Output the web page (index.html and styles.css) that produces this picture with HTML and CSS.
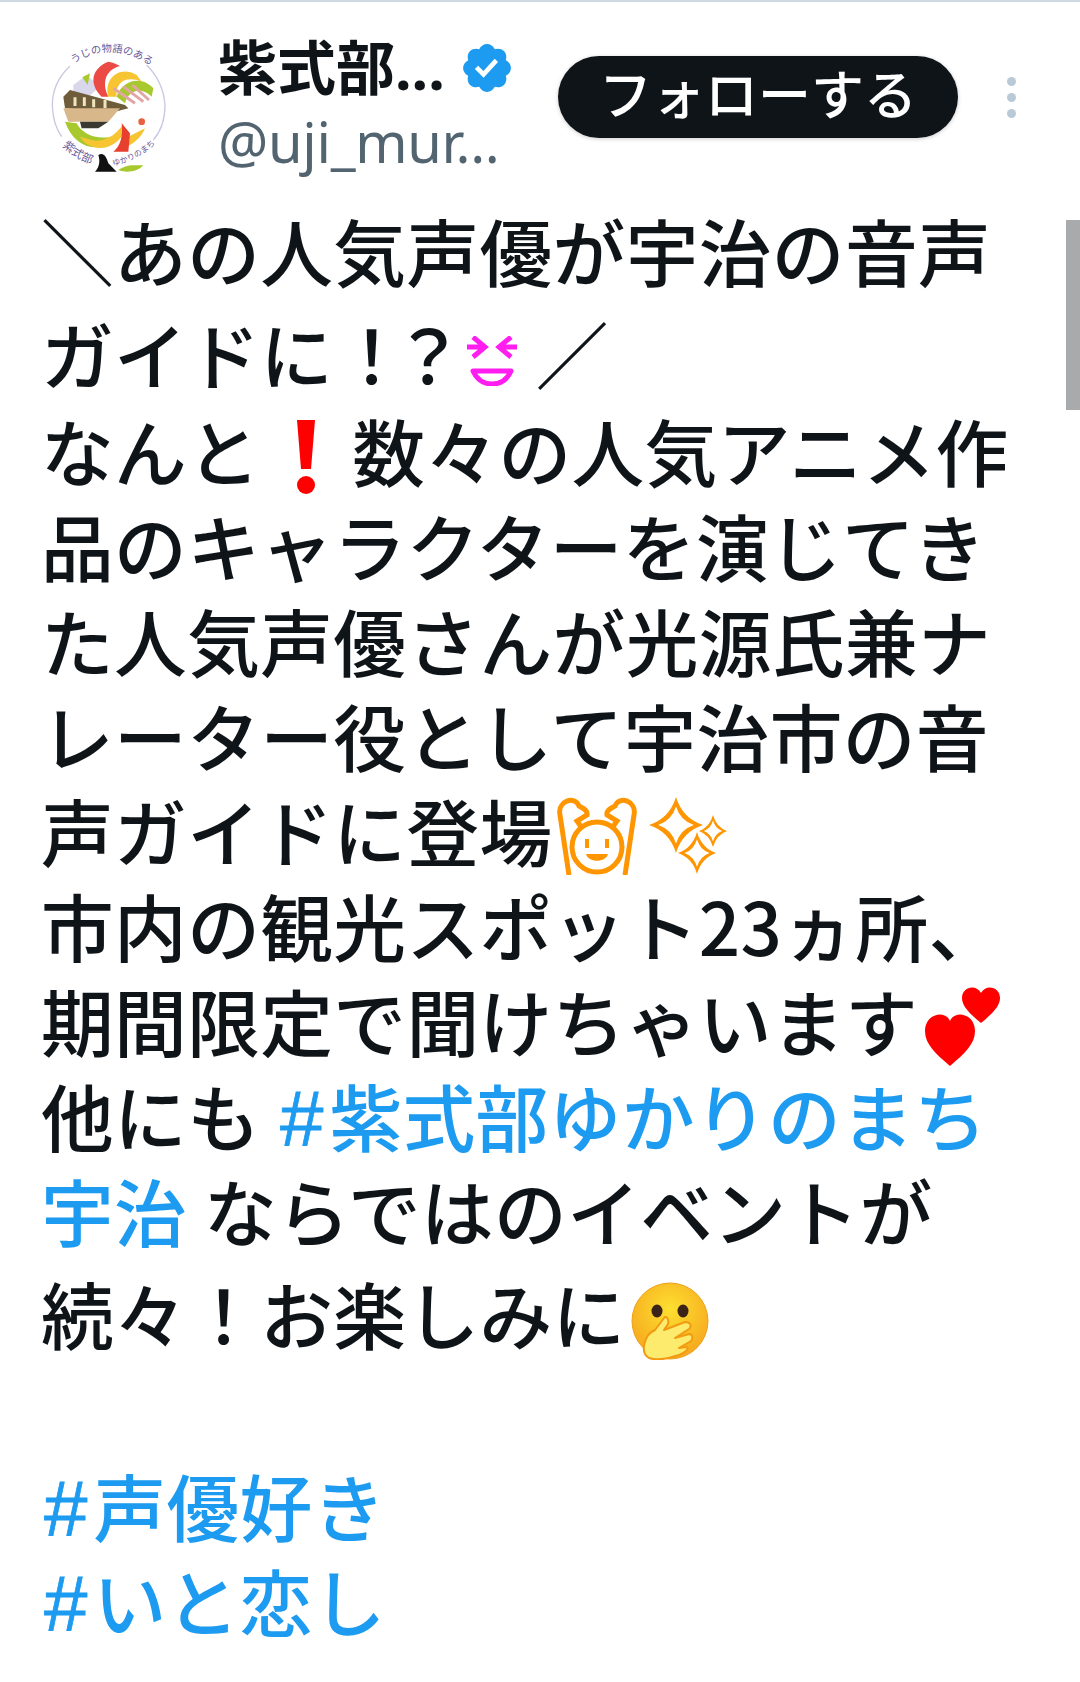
FILE: index.html
```html
<!DOCTYPE html>
<html lang="ja">
<head>
<meta charset="utf-8">
<title>Tweet</title>
<link rel="stylesheet" href="styles.css">
</head>
<body>
<div class="scrollbar"></div>
<header class="head">
  <svg class="avatar" viewBox="0 0 390 438" aria-hidden="true">
    <path d="M75 78Q20 130 22 200 25 255 50 290M305 75Q355 125 360 195 360 260 325 300" fill="none" stroke="#c8c9e2" stroke-width="4"/>
    <path d="M85 135L125 105 165 140 130 170 85 165Z" fill="#d9d7ec"/>
    <path d="M112 112L135 100 128 135Z" fill="#a8c92e"/>
    <path d="M170 170C130 130 140 85 190 65 205 68 215 72 225 78 180 90 170 130 190 170Z" fill="#ec4a45"/>
    <path d="M190 170C175 115 225 75 275 105L290 125C240 105 210 130 215 170Z" fill="#f7c531"/>
    <path d="M215 170C230 120 290 105 325 145L320 170C290 140 250 150 240 190Z" fill="#a8c92e"/>
    <path d="M205 145L270 190M235 140L295 185M262 135L312 180" stroke="#e3a6a6" stroke-width="9"/>
    <path d="M55 170L75 150 240 195 250 205 210 215 60 205Z" fill="#6e5c3a"/>
    <path d="M90 172V198M118 172V198M146 178V202M180 180V204" stroke="#efe6bc" stroke-width="9"/>
    <path d="M55 205H225L190 245H70Z" fill="#d8b88a"/>
    <path d="M105 245H190L160 265H110Z" fill="#3a3830"/>
    <path d="M60 245C80 300 120 330 175 320L200 290C150 300 110 280 95 250Z" fill="#a8c92e"/>
    <path d="M105 290C130 330 190 340 230 290L235 250C220 280 180 310 140 300Z" fill="#f7c531"/>
    <path d="M235 325C270 310 290 290 300 265L250 290Z" fill="#f7c531"/>
    <path d="M230 250C235 290 225 320 205 335L250 335 255 280Z" fill="#e8402f"/>
    <circle cx="290" cy="245" r="10" fill="#e8603f"/>
    <path id="arc-top" d="M85 72Q190 0 305 70" fill="none"/>
    <path id="arc-left" d="M52 318Q95 360 155 378" fill="none"/>
    <path id="arc-right" d="M205 378Q280 360 335 308" fill="none"/>
    <text class="avatar-text"><textPath href="#arc-top">うじの物語のある</textPath></text>
    <text class="avatar-text big"><textPath href="#arc-left">紫式部</textPath></text>
    <text class="avatar-text small"><textPath href="#arc-right">ゆかりのまち</textPath></text>
    <path d="M160 345C175 335 185 350 190 370L215 395H150C165 380 165 360 160 345Z" fill="#111"/>
    <path d="M220 390C250 370 270 378 295 375 280 395 245 400 220 390Z" fill="#a8c92e"/>
  </svg>
  <div class="who">
    <div class="name-row">
      <span class="name">紫式部...</span>
      <svg class="badge" viewBox="0 0 24 24" aria-hidden="true">
        <circle cx="12" cy="12" r="7" fill="#fff"/>
        <path fill="#1d9bf0" d="M22.25 12c0-1.43-.88-2.67-2.19-3.34.46-1.39.2-2.9-.81-3.91s-2.52-1.27-3.91-.81c-.66-1.31-1.91-2.19-3.34-2.19s-2.67.88-3.33 2.19c-1.4-.46-2.91-.2-3.92.81s-1.26 2.52-.8 3.91c-1.31.67-2.2 1.91-2.2 3.34s.89 2.67 2.2 3.34c-.46 1.39-.21 2.9.8 3.91s2.52 1.26 3.91.81c.67 1.31 1.91 2.19 3.34 2.19s2.68-.88 3.34-2.19c1.39.45 2.9.2 3.91-.81s1.27-2.52.81-3.91c1.31-.67 2.19-1.91 2.19-3.34zm-11.71 4.2L6.8 12.46l1.41-1.42 2.26 2.26 4.8-5.23 1.47 1.36-6.2 6.77z"/>
      </svg>
    </div>
    <div class="handle">@uji_mur...</div>
  </div>
  <button class="follow">フォローする</button>
  <div class="dots"><i></i><i></i><i></i></div>
</header>
<main class="body">
  <div class="line">＼あの人気声優が宇治の音声</div>
  <div class="line tall">ガイドに<span class="ex">！</span><span class="q">？</span><svg class="emoji e-laugh" viewBox="0 0 50 50" aria-hidden="true"><g fill="none" stroke="#ff1df0" stroke-width="5"><path d="M0 11H17M6 1l12 10-12 10M50 11H33M44 1L32 11l12 10"/><path d="M6 35H44C40 44 33 48 25 48S10 44 6 35Z" stroke-linejoin="round"/></g></svg><span class="after-laugh">／</span></div>
  <div class="line">なんと<svg class="emoji e-excl" viewBox="0 0 18 74" aria-hidden="true"><path d="M0 0H18L14 49H4Z" fill="#f00"/><circle cx="9" cy="65" r="9" fill="#f00"/></svg>数々の人気アニメ作</div>
  <div class="line">品のキャラクターを演じてき</div>
  <div class="line">た人気声優さんが光源氏兼ナ</div>
  <div class="line">レーター役として宇治市の音</div>
  <div class="line">声ガイドに登場<svg class="emoji e-hands" viewBox="0 0 80 78" aria-hidden="true"><g fill="none" stroke="#ff9500" stroke-width="5"><path d="M12 78L3 18C0 4 18-2 22 9 26 11 31 13 30 18L20 24 25 31"/><path d="M68 78L77 18C80 4 62-2 58 9 54 11 49 13 50 18L60 24 55 31"/><circle cx="40" cy="50" r="25"/></g><path d="M28 42h4v9h-4zM48 42h4v9h-4z" fill="#ff9500"/><path d="M29 57H51C49 66 31 66 29 57Z" fill="#ff9500"/></svg><svg class="emoji e-spark" viewBox="0 0 80 78" aria-hidden="true"><defs><g id="star"><path fill="#ff9500" d="M0-1Q.24-.24 1 0 .24.24 0 1-.24.24-1 0-.24-.24 0-1Z"/><path fill="#fff" d="M0-.66Q.16-.16.66 0 .16.16 0 .66-.16.16-.66 0-.16-.16 0-.66Z"/></g></defs><use href="#star" transform="translate(27 28) scale(27 28)"/><use href="#star" transform="translate(64 34) scale(14 16)"/><use href="#star" transform="translate(48 56) scale(19 21)"/></svg></div>
  <div class="line">市内の観光スポット23ヵ所、</div>
  <div class="line">期間限定で聞けちゃいます<svg class="emoji e-hearts" viewBox="0 0 76 80" aria-hidden="true"><path fill="#f00" d="M25 79C10 66 0 57 0 44 0 27 20 22 25 34 30 22 50 27 50 44 50 57 40 66 25 79Z"/><path fill="#f00" d="M56 36C44 26 37 19 37 11 37-1 52-3 56 6 60-3 75-1 75 11 75 19 68 26 56 36Z"/></svg></div>
  <div class="line">他にも <a class="tag"><span class="hash">#</span>紫式部ゆかりのまち</a></div>
  <div class="line"><a class="tag">宇治</a> ならではのイベントが</div>
  <div class="line tall">続々！お楽しみに<svg class="emoji e-face" viewBox="0 0 78 78" aria-hidden="true"><defs><radialGradient id="skin" cx="50%" cy="35%" r="65%"><stop offset="0" stop-color="#fde030"/><stop offset="1" stop-color="#f6a71e"/></radialGradient></defs><circle cx="39" cy="39" r="38" fill="url(#skin)" stroke="#eea01a" stroke-width="1"/><ellipse cx="26" cy="29" rx="5.500" ry="6.500" fill="#3b2417"/><ellipse cx="52" cy="29" rx="5.500" ry="6.500" fill="#3b2417"/><path d="M18 76C8 70 14 52 24 48L33 36C36 33 38 38 37 42L33 48 54 40C60 40 61 44 58 47L44 56 58 52C62 52 62 57 60 59L48 66 56 65C58 67 54 71 48 73 38 76 28 79 18 76Z" fill="#fdeb6e" stroke="#f29a12" stroke-width="2" stroke-linejoin="round"/></svg></div>
  <div class="line blank"></div>
  <div class="line"><a class="tag"><span class="hash">#</span>声優好き</a></div>
  <div class="line"><a class="tag"><span class="hash">#</span>いと恋し</a></div>
</main>
</body>
</html>
```
FILE: styles.css
```css
html, body { margin: 0; padding: 0; background: #fff; }
body {
  width: 1080px;
  height: 1682px;
  overflow: hidden;
  position: relative;
  border-top: 2px solid #cfd9e2;
  box-sizing: border-box;
  font-family: "Noto Sans CJK JP", "Noto Sans", sans-serif;
  color: #0f1419;
}
.scrollbar {
  position: absolute;
  right: 0;
  top: 218px;
  width: 14px;
  height: 190px;
  background: #a9aaac;
}
.head {
  display: flex;
  align-items: flex-start;
  height: 200px;
  padding-left: 45px;
  box-sizing: border-box;
}
.avatar { width: 130px; height: 146px; margin-top: 38px; flex: none; }
.avatar-text { font-size: 31px; fill: #6a5a9c; }
.avatar-text.big { font-size: 34px; }
.avatar-text.small { font-size: 24px; }
.who { margin-left: 43px; width: 340px; flex: none; padding-top: 29px; }
.name-row { display: flex; align-items: center; height: 72px; }
.name {
  font-family: "Noto Sans", "Noto Sans CJK JP", sans-serif;
  font-size: 59px;
  font-weight: 700;
  line-height: 72px;
}
.badge { width: 56px; height: 56px; margin-left: 14px; margin-top: 2px; }
.handle {
  font-family: "Noto Sans", sans-serif;
  font-size: 56px;
  line-height: 76px;
  color: #536471;
  letter-spacing: -.3px;
}
.follow {
  margin-top: 54px;
  width: 400px;
  height: 82px;
  border: 0;
  border-radius: 41px;
  background: #0f1419;
  color: #fff;
  font: 500 53px/70px "Noto Sans CJK JP", sans-serif;
  padding: 0 0 10px;
  box-shadow: 0 1px 4px rgba(0, 0, 0, .2);
  flex: none;
}
.dots { margin: 75px 0 0 49px; display: flex; flex-direction: column; gap: 7px; }
.dots i { width: 9px; height: 9px; border-radius: 50%; background: #b9cad6; display: block; }
.body { padding-left: 41px; font-size: 72.700px; letter-spacing: .4px; font-weight: 500; white-space: nowrap; }
.line { height: 95px; line-height: 95px; }
.tall { height: 105px; line-height: 99px; padding-top: 6px; box-sizing: border-box; }
.blank { height: 95px; }
.tag { color: #1d9bf0; }
.hash { font-family: "Liberation Sans", sans-serif; font-size: 78px; font-weight: 400; letter-spacing: 6px; margin-left: 3px; -webkit-text-stroke: .8px #1d9bf0; }
.ex { font-feature-settings: "palt"; margin-left: 20px; }
.q { font-feature-settings: "palt"; margin-left: 12px; }
.emoji { display: inline-block; vertical-align: -14px; }
.e-laugh { width: 50px; height: 50px; margin-left: 12px; vertical-align: -2px; }
.after-laugh { margin-left: 19px; }
.e-excl { width: 18px; height: 74px; margin: 0 37px; vertical-align: -13px; }
.e-hands { width: 80px; height: 78px; margin-left: 4px; }
.e-spark { width: 80px; height: 78px; margin-left: 12px; }
.e-hearts { width: 76px; height: 80px; margin-left: 7px; vertical-align: -16px; }
.e-face { width: 78px; height: 78px; margin-left: 5px; vertical-align: -16px; }
```
